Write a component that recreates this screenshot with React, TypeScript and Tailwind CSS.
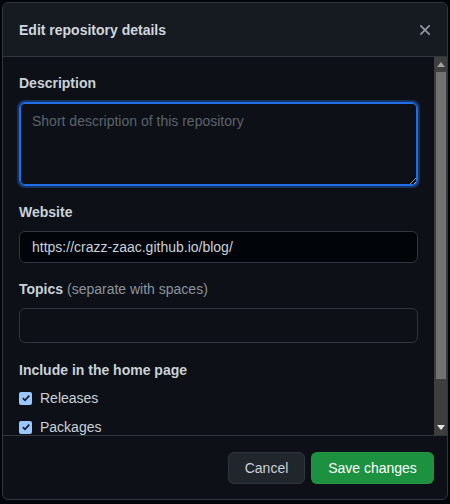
import { useState } from "react";

const font = { fontFamily: '"Liberation Sans", Arial, sans-serif' };

const CloseIcon = () => (
  <svg width="18" height="18" viewBox="0 0 16 16" fill="currentColor">
    <path d="M3.72 3.72a.75.75 0 0 1 1.06 0L8 6.94l3.22-3.22a.749.749 0 0 1 1.275.326.749.749 0 0 1-.215.734L9.06 8l3.22 3.22a.749.749 0 0 1-.326 1.275.749.749 0 0 1-.734-.215L8 9.06l-3.22 3.22a.751.751 0 0 1-1.042-.018.751.751 0 0 1-.018-1.042L6.94 8 3.72 4.78a.75.75 0 0 1 0-1.06Z" />
  </svg>
);

const Check = ({ label }: { label: string }) => (
  <label className="flex items-center h-5 text-sm text-[#c9d1d9]">
    <span className="w-[13px] h-[13px] rounded-[2px] bg-[#99c8ff] flex items-center justify-center mr-[8px]">
      <svg width="10" height="10" viewBox="0 0 10 10">
        <path d="M1.8 5.2 4 7.3 8.3 2.6" stroke="#1b1f2a" strokeWidth="1.8" fill="none" />
      </svg>
    </span>
    {label}
  </label>
);

// fake classic scrollbar beside the scrolling body
const ScrollBar = () => (
  <div className="w-[13px] bg-[#3e3e3e] flex flex-col items-center">
    <div className="h-[15px] w-full flex items-center justify-center">
      <svg width="8" height="5" viewBox="0 0 8 5">
        <path d="M0 5 4 0 8 5Z" fill="#a3a3a3" />
      </svg>
    </div>
    <div className="h-[307px] w-[10px] ml-[1px] bg-[#727272]" />
    <div className="flex-1" />
    <div className="h-[15px] w-full flex items-center justify-center">
      <svg width="8" height="5" viewBox="0 0 8 5">
        <path d="M0 0 4 5 8 0Z" fill="#e6e6e6" />
      </svg>
    </div>
  </div>
);

export default function App() {
  const [website, setWebsite] = useState("https://crazz-zaac.github.io/blog/");

  return (
    <div className="w-[450px] h-[504px] bg-[#010409] pt-[2px] pl-[2px] overflow-hidden" style={font}>
      <div className="w-[446px] h-[498px] flex flex-col rounded-md border border-[#30363d] bg-[#0d1117] overflow-hidden">
        {/* Header */}
        <div className="h-[54px] shrink-0 flex items-center justify-between pl-4 pr-[6px] bg-[#161b22] border-b border-[#30363d]">
          <h1 className="text-sm font-bold text-[#d0d7de]">Edit repository details</h1>
          <button className="w-8 h-8 flex items-center justify-center text-[#9198a1]">
            <CloseIcon />
          </button>
        </div>

        {/* Body */}
        <div className="flex-1 min-h-0 flex">
          <div className="flex-1 overflow-hidden pt-4 px-4">
            <div className="text-sm font-bold text-[#c9d1d9] leading-5 mb-[9px]">Description</div>
            <textarea
              placeholder="Short description of this repository"
              className="block w-[399px] h-[84px] rounded-md border border-[#1f6feb] bg-[#0d1117] px-3 pt-[8px] pb-[5px] text-sm leading-5 text-[#c9d1d9] placeholder:text-[#5b636d] outline-none resize-y shadow-[inset_0_0_0_1px_#1f6feb,0_0_0_2px_rgba(31,111,235,0.35)] scheme-dark"
            />

            <div className="text-sm font-bold text-[#c9d1d9] leading-5 mt-4 mb-[9px]">Website</div>
            <input
              value={website}
              onChange={(e) => setWebsite(e.target.value)}
              className="block w-[399px] h-8 rounded-md border border-[#30363d] bg-[#010409] px-3 text-sm text-[#c9d1d9] outline-none"
            />

            <div className="text-sm leading-5 mt-4 mb-[9px] text-[#8b949e]">
              <span className="font-bold text-[#c9d1d9]">Topics</span> (separate with spaces)
            </div>
            <div className="w-[399px] h-[35px] rounded-md border border-[#30363d] bg-[#0d1117]" />

            <div className="text-sm font-bold text-[#c9d1d9] leading-5 mt-[17px] mb-2">Include in the home page</div>
            <div className="flex flex-col gap-[9px]">
              <Check label="Releases" />
              <Check label="Packages" />
            </div>
          </div>
          <ScrollBar />
        </div>

        {/* Footer */}
        <div className="h-[64px] shrink-0 border-t border-[#30363d] flex justify-end gap-[6px] pt-4 pr-[13px]">
          <button className="w-[77px] h-8 rounded-md border border-[#30363d] bg-[#21262d] text-sm text-[#c9d1d9]">
            Cancel
          </button>
          <button className="w-[123px] h-8 rounded-md border border-[#2ea043]/40 bg-[#1c913f] text-sm text-white">
            Save changes
          </button>
        </div>
      </div>
    </div>
  );
}
